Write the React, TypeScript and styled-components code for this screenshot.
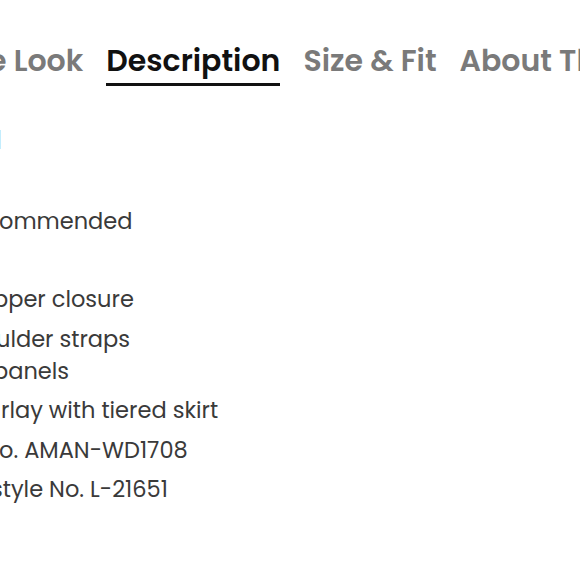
import React from 'react';
import styled, { createGlobalStyle } from 'styled-components';

const GlobalStyle = createGlobalStyle`
  html, body {
    margin: 0;
    padding: 0;
    background: #ffffff;
  }
  body {
    font-family: "Poppins", "Inter", "Noto Sans", sans-serif;
  }
`;

const tabs = [
  { label: 'e Look', active: false },
  { label: 'Description', active: true },
  { label: 'Size & Fit', active: false },
  { label: 'About Th', active: false },
];

// each item is a list of [text, left offset] lines (the panel is cut at the left edge)
const details: [string, number][][] = [
  [['pper closure', -7]],
  [['ulder straps', -4], ['panels', -7]],
  [['rlay with tiered skirt', 1]],
  [['o. AMAN-WD1708', -1]],
  [['style No. L-21651', -9]],
];

export default function App() {
  return (
    <>
      <GlobalStyle />
      <Page>
        <TabBar>
          {tabs.map((t) => (
            <Tab key={t.label} $active={t.active}>
              {t.label}
            </Tab>
          ))}
        </TabBar>

        <Panel>
          <LinkTail>l</LinkTail>
          <Note>ommended</Note>
          <DetailList>
            {details.map((item, i) => (
              <DetailItem key={i}>
                {item.map(([text, shift]) => (
                  <Line key={text} $shift={shift}>
                    {text}
                  </Line>
                ))}
              </DetailItem>
            ))}
          </DetailList>
        </Panel>
      </Page>
    </>
  );
}

const Page = styled.div`
  width: 580px;
  height: 580px;
  overflow: hidden;
  background: #fff;
`;

const TabBar = styled.div`
  display: flex;
  gap: 23px;
  padding-top: 41px;
  margin-left: -12px;
  white-space: nowrap;
`;

const Tab = styled.div<{ $active: boolean }>`
  font-size: 30px;
  font-weight: 600;
  line-height: 40px;
  padding-bottom: 2px;
  color: ${(p) => (p.$active ? '#111111' : '#7a7a7a')};
  border-bottom: 3px solid ${(p) => (p.$active ? '#111111' : 'transparent')};
`;

const Panel = styled.div`
  display: flex;
  flex-direction: column;
  align-items: flex-start;
  color: #3a3a3a;
  font-size: 22.5px;
`;

const LinkTail = styled.span`
  margin-top: 41px;
  margin-left: -4px;
  font-size: 24px;
  line-height: 28px;
  color: #5f92d0;
`;

const Note = styled.p`
  margin: 50px 0 0 -1px;
  line-height: 32px;
`;

const DetailList = styled.div`
  display: flex;
  flex-direction: column;
  gap: 7.5px;
  margin-top: 46px;
`;

const DetailItem = styled.div`
  display: flex;
  flex-direction: column;
`;

const Line = styled.span<{ $shift: number }>`
  line-height: 32px;
  white-space: nowrap;
  margin-left: ${(p) => p.$shift}px;
`;
